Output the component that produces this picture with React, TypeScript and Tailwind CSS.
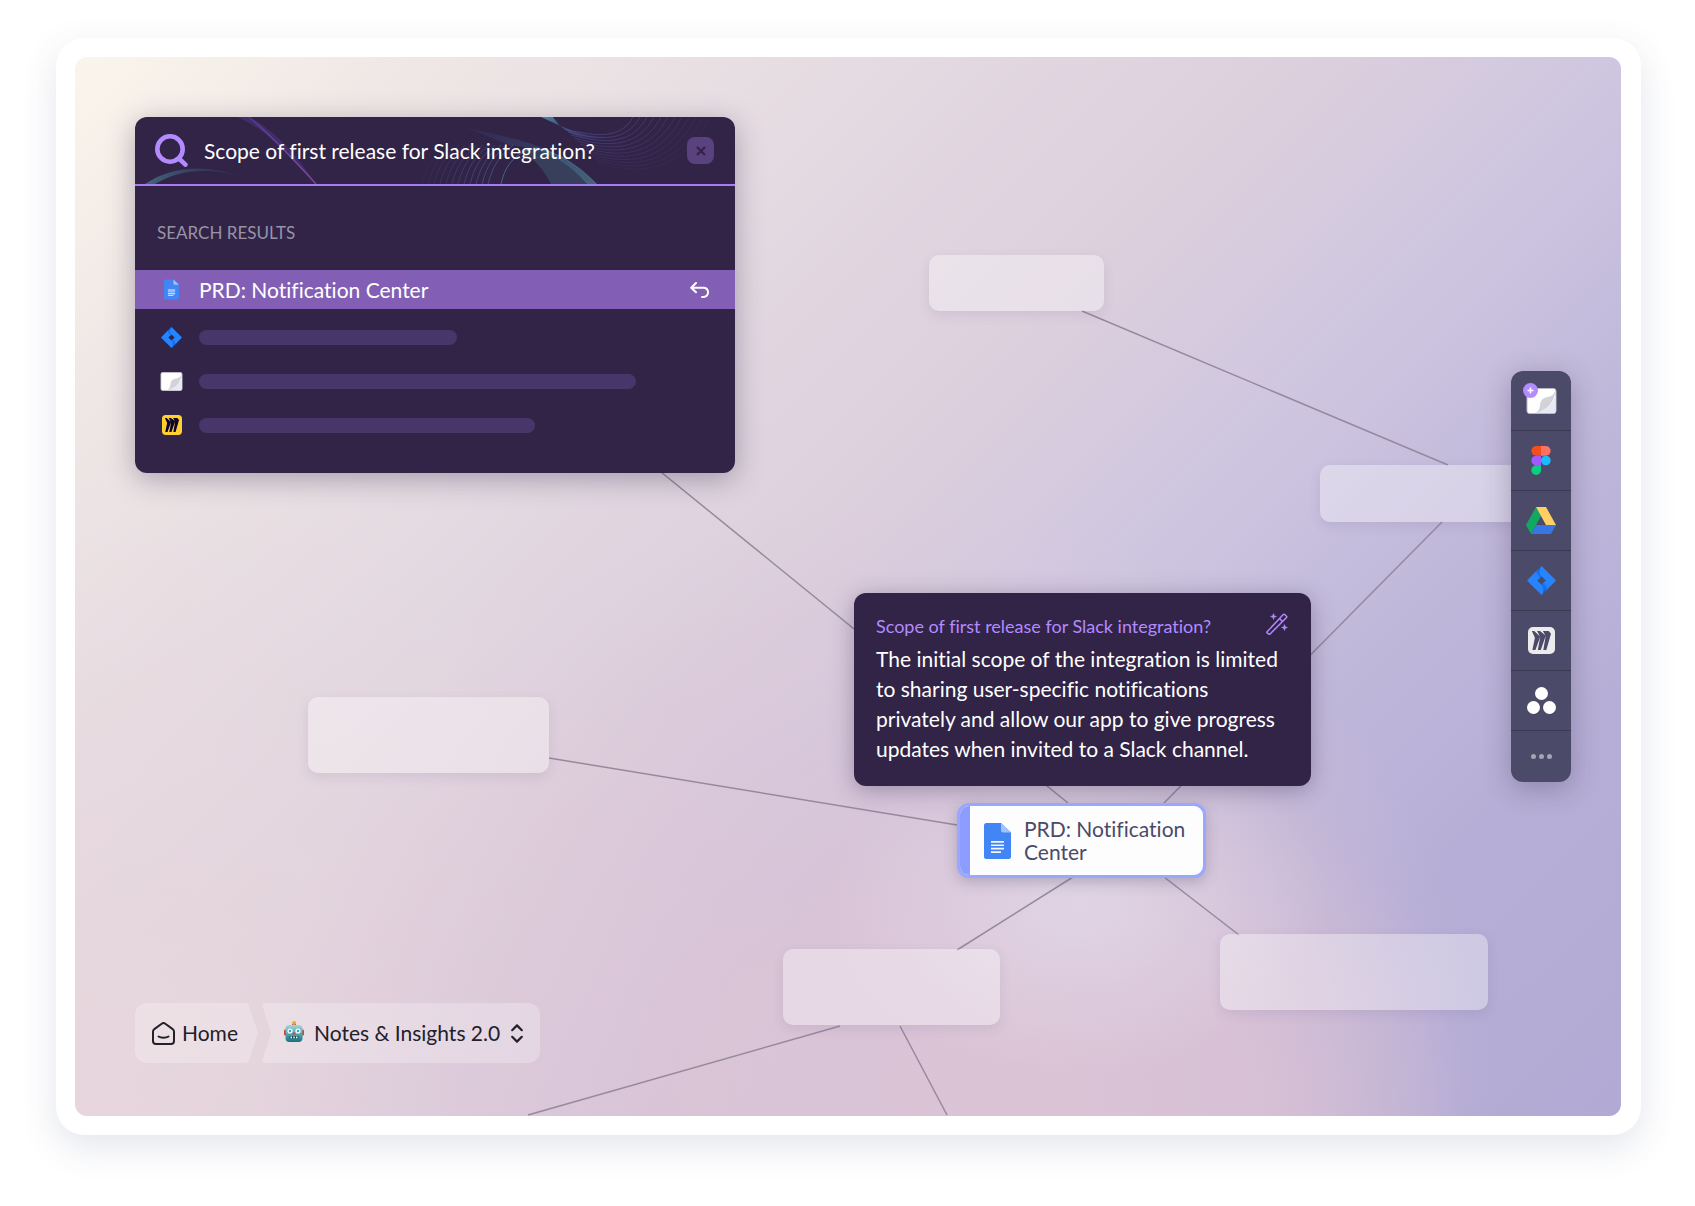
import React from "react";

type IconProps = { className?: string };

const edges = [
  { from: [1007, 254], to: [1373, 408] },
  { from: [1367, 465], to: [1089, 746] },
  { from: [586, 415], to: [993, 746] },
  { from: [474, 701], to: [882, 768] },
  { from: [998, 820], to: [882, 893] },
  { from: [1089, 820], to: [1164, 878] },
  { from: [765, 969], to: [453, 1058] },
  { from: [825, 969], to: [872, 1058] },
];

const emptyNodes = [
  "left-[854px] top-[198px] w-[175px] h-14",
  "left-[1245px] top-[408px] w-[220px] h-[57px]",
  "left-[233px] top-[640px] w-[241px] h-19",
  "left-[708px] top-[892px] w-[217px] h-19",
  "left-[1145px] top-[877px] w-[268px] h-19",
];

function DocIcon({ className }: IconProps) {
  return (
    <svg viewBox="0 0 27 36" className={className} aria-hidden="true">
      <path d="M2.500 0H17l10 9.500v24a2.500 2.500 0 0 1-2.500 2.500h-22A2.500 2.500 0 0 1 0 33.500V2.500A2.500 2.500 0 0 1 2.500 0Z" fill="#4285f4" />
      <path d="M17 0l10 9.500H19.500A2.500 2.500 0 0 1 17 7Z" fill="#a1c2fa" />
      <path d="M7 18h13v1.700H7zM7 21.400h13v1.700H7zM7 24.800h13v1.700H7zM7 28.200h10v1.700H7z" fill="#f1f5fd" />
    </svg>
  );
}

function JiraIcon({ className, id }: IconProps & { id: string }) {
  return (
    <svg viewBox="0 0 28 28" className={className} aria-hidden="true">
      <defs>
        <linearGradient id={id + "a"} x1="0.95" y1="0.1" x2="0.35" y2="0.75">
          <stop offset="0.1" stopColor="#0052cc" />
          <stop offset="1" stopColor="#2684ff" />
        </linearGradient>
        <linearGradient id={id + "b"} x1="0.05" y1="0.9" x2="0.65" y2="0.25">
          <stop offset="0.1" stopColor="#0052cc" />
          <stop offset="1" stopColor="#2684ff" />
        </linearGradient>
      </defs>
      <path d="M14 0 27.400 13.200a1.200 1.200 0 0 1 0 1.600L14 28 .6 14.800a1.200 1.200 0 0 1 0-1.600Zm0 9.900L9.800 14l4.200 4.100L18.200 14Z" fill="#2684ff" fillRule="evenodd" />
      <path d="M14 9.900A6.900 6.900 0 0 1 14 0L6.500 7.400l5.300 4.700Z" fill={`url(#${id}a)`} />
      <path d="M18.200 14 14 18.100a6.900 6.900 0 0 1 0 9.900l7.500-7.400-5.300-4.700Z" fill={`url(#${id}b)`} />
    </svg>
  );
}

function BoardIcon({ className }: IconProps) {
  return (
    <svg viewBox="0 0 30 26" className={className} aria-hidden="true">
      <rect x="0.500" y="0.500" width="29" height="25" rx="2.500" fill="#fff" stroke="#b9b7c4" />
      <path d="M29 7v16a2 2 0 0 1-2 2H9C20 23 27 15 29 7Z" fill="#e8e8f2" />
      <path d="M29 2C28.500 14 20 23 8.500 25c4-2 4.500-4 5-8 .5-5 3.500-7.500 8-8 3.500-.5 6-2.500 7.500-7Z" fill="#d2d2d8" />
    </svg>
  );
}

function MiroIcon({ className, bg, fg }: IconProps & { bg: string; fg: string }) {
  return (
    <svg viewBox="0 0 27 27" className={className} aria-hidden="true">
      <rect width="27" height="27" rx="5" fill={bg} />
      <path
        d="M17.800 4h-2.900l2.400 4.200L12 4H9.100l2.700 5.200L6.200 4H3.900l3 6.800L4.400 23h3l5-13.500L9.800 23h3l5-14.500L15.300 23h3l4.700-16.300L20.700 4h-2.900l.5 2Z"
        fill={fg}
      />
    </svg>
  );
}

function FigmaIcon() {
  return (
    <svg viewBox="0 0 20 30" className="h-[29px] w-5" aria-hidden="true">
      <path d="M5 0h5v10H5A5 5 0 0 1 5 0Z" fill="#f24e1e" />
      <path d="M10 0h5a5 5 0 0 1 0 10h-5Z" fill="#ff7262" />
      <path d="M5 10h5v10H5a5 5 0 0 1 0-10Z" fill="#a259ff" />
      <circle cx="15" cy="15" r="5" fill="#1abcfe" />
      <path d="M5 20h5v5a5 5 0 1 1-5-5Z" fill="#0acf83" />
    </svg>
  );
}

function DriveIcon() {
  return (
    <svg viewBox="0 0 30 27" className="h-[27px] w-[30px]" aria-hidden="true">
      <path d="M10 0 0 18l5 9L15 9Z" fill="#11a861" />
      <path d="M10 0h10l10 18H20Z" fill="#ffcf63" />
      <path d="M5 27l5-9h20l-5 9Z" fill="#3777e3" />
    </svg>
  );
}

function AsanaIcon() {
  return (
    <svg viewBox="0 0 29 27" className="h-[27px] w-[29px]" fill="#fff" aria-hidden="true">
      <circle cx="14.500" cy="6.500" r="6.500" />
      <circle cx="6.500" cy="20.500" r="6.500" />
      <circle cx="22.500" cy="20.500" r="6.500" />
    </svg>
  );
}

function RobotIcon() {
  return (
    <svg viewBox="0 0 20 21" className="h-[21px] w-5" aria-hidden="true">
      <defs>
        <linearGradient id="robot" x1="0" y1="0" x2="0" y2="1">
          <stop offset="0" stopColor="#a9d3d4" />
          <stop offset="0.55" stopColor="#4fa3ad" />
          <stop offset="1" stopColor="#14707f" />
        </linearGradient>
      </defs>
      <rect x="8.200" y="2.500" width="3.800" height="2.500" fill="#5b4a8c" />
      <circle cx="10.100" cy="2" r="2" fill="#f6a623" />
      <rect x="0" y="8.500" width="3" height="6" rx="1.200" fill="#c8453b" />
      <rect x="17" y="8.500" width="3" height="6" rx="1.200" fill="#c8453b" />
      <rect x="1.500" y="4" width="17" height="17" rx="4" fill="url(#robot)" />
      <circle cx="6" cy="10" r="2.600" fill="#e8fbff" />
      <circle cx="14" cy="10" r="2.600" fill="#e8fbff" />
      <circle cx="6" cy="10" r="1.200" fill="#2f9fd0" />
      <circle cx="14" cy="10" r="1.200" fill="#2f9fd0" />
      <path d="M10 10.500l1.600 3H8.400Z" fill="#d63f2f" />
      <rect x="5.500" y="15" width="9" height="2.600" rx="0.800" fill="#0e4f5c" />
      <path d="M6.500 15.400h1.500v1.800H6.500zM9.300 15.400h1.500v1.800H9.300zM12 15.400h1.500v1.800H12z" fill="#e9f7f7" />
    </svg>
  );
}

function WandIcon() {
  return (
    <svg viewBox="0 0 22 22" className="h-[22px] w-[22px] shrink-0" fill="none" stroke="#b48aff" strokeWidth="1.400" strokeLinejoin="round" aria-hidden="true">
      <path d="M.9 18.900 17.300 1.500a1 1 0 0 1 1.400 0l1.800 1.700a1 1 0 0 1 0 1.400L4.100 20.900a1 1 0 0 1-1.400 0L1 19.900a.8.8 0 0 1 0-1Z" />
      <path d="m13.500 5.600 3 2.900" />
      <path d="M7.500.5 8.300 2.700 10.500 3.500 8.300 4.300 7.500 6.500 6.700 4.300 4.500 3.500 6.700 2.700ZM18.500 11.500l.8 2.200 2.200.8-2.200.8-.8 2.200-.8-2.200-2.200-.8 2.200-.8Z" fill="#b48aff" strokeWidth="0.500" />
    </svg>
  );
}

function HeaderWaves() {
  return (
    <svg viewBox="0 0 600 67" preserveAspectRatio="xMinYMin slice" className="absolute inset-0 h-full w-full" fill="none" aria-hidden="true">
      <defs>
        <linearGradient id="purpleFade" x1="0" y1="0" x2="1" y2="1">
          <stop offset="0" stopColor="#6a45b0" stopOpacity="0.500" />
          <stop offset="0.600" stopColor="#8a55c4" stopOpacity="0.700" />
          <stop offset="1" stopColor="#a45ab8" stopOpacity="0.600" />
        </linearGradient>
        <linearGradient id="tealFade" x1="0" y1="0" x2="1" y2="0">
          <stop offset="0" stopColor="#4f93a0" stopOpacity="0.600" />
          <stop offset="1" stopColor="#3a4f80" stopOpacity="0.100" />
        </linearGradient>
        <linearGradient id="ribbonTop" x1="0" y1="0" x2="1" y2="1">
          <stop offset="0" stopColor="#4f9cb8" stopOpacity="0.800" />
          <stop offset="1" stopColor="#4a4aa0" stopOpacity="0.100" />
        </linearGradient>
        <linearGradient id="ribbonBottom" x1="0" y1="0" x2="1" y2="1">
          <stop offset="0" stopColor="#3f5aa0" stopOpacity="0.100" />
          <stop offset="0.500" stopColor="#3f6a9c" stopOpacity="0.350" />
          <stop offset="1" stopColor="#5aa0b0" stopOpacity="0.400" />
        </linearGradient>
      </defs>
      <path d="M102 0C135 14 155 38 181 67 160 36 140 14 114 0Z" fill="#5c3ba0" opacity="0.400" />
      <path d="M114 0C138 20 160 44 181 67" stroke="url(#purpleFade)" strokeWidth="1.500" />
      <path d="M10 67C35 50 70 46 108 60 70 50 45 53 20 67Z" fill="url(#tealFade)" />
      <path d="M406 0C428 10 445 19 470 20 450 26 428 16 418 0Z" fill="url(#ribbonTop)" />
      <path d="M330 10C365 20 425 25 462 67H452C430 40 400 30 374 28Z" fill="url(#ribbonBottom)" />
      <path d="M400 30C425 36 440 50 460 67H416C408 52 400 42 386 34Z" fill="#4f9098" opacity="0.250" />
      {[0, 1, 2, 3, 4, 5, 6, 7, 8, 9, 10, 11].map((n) => (
        <path
          key={n}
          d={`M${498 + n * 7} 0C${486 + n * 6} ${22 + n * 2} ${462 + n * 5} ${20 + n * 4} ${430 + n * 3} ${12 + n * 3}`}
          stroke="#6a62b8"
          strokeOpacity={0.5 - n * 0.035}
          strokeWidth="0.800"
        />
      ))}
      {[0, 1, 2, 3, 4, 5, 6, 7, 8, 9, 10, 11, 12].map((n) => (
        <path
          key={n}
          d={`M${353 - n * 6} 67C${358 - n * 6} 48 ${364 - n * 6} 40 ${378 - n * 6} 28`}
          stroke="#5a78c0"
          strokeOpacity={0.6 - n * 0.045}
          strokeWidth="0.800"
        />
      ))}
      <path d="M366 67C370 50 376 42 390 34 415 26 440 48 461 67" stroke="#5aa0b4" strokeOpacity="0.500" />
    </svg>
  );
}

const results = [
  { name: "Jira issue", icon: <JiraIcon id="jiraRow" className="size-[21px]" />, bar: "w-[258px]" },
  { name: "Whiteboard", icon: <BoardIcon className="h-[19px] w-[23px]" />, bar: "w-[437px]" },
  { name: "Miro board", icon: <MiroIcon bg="#ffd02f" fg="#0c0530" className="size-5" />, bar: "w-[336px]" },
];

function SearchPanel() {
  return (
    <section className="pointer-events-auto w-[600px] overflow-hidden rounded-xl bg-[#312447] pb-[26px] shadow-[0_6px_28px_rgba(49,36,71,0.35)]">
      <div className="relative flex h-[69px] items-center border-b-2 border-[#a77bf3] pl-5 pr-[21px]">
        <HeaderWaves />
        <svg viewBox="0 0 33 33" className="relative size-[33px] shrink-0" fill="none" stroke="#b48aff" strokeWidth="4.600" strokeLinecap="round" aria-hidden="true">
          <circle cx="15" cy="15" r="12.700" />
          <path d="m24.500 25 5.900 5.600" />
        </svg>
        <input
          type="text"
          aria-label="Search"
          defaultValue="Scope of first release for Slack integration?"
          className="relative ml-4 min-w-0 flex-1 bg-transparent text-[21px] leading-6 text-white outline-none"
        />
        <button type="button" aria-label="Clear search" className="relative flex size-[27px] items-center justify-center rounded-lg bg-[#5a427f]">
          <svg viewBox="0 0 10 10" className="size-[10px]" stroke="#312447" strokeWidth="2.200" aria-hidden="true">
            <path d="M1 1l8 8M9 1 1 9" />
          </svg>
        </button>
      </div>
      <h2 className="mt-[35px] pl-[22px] text-[17px] leading-6 text-[#9a93a8]">SEARCH RESULTS</h2>
      <button type="button" className="mt-[25px] flex h-[39px] w-full items-center bg-[#825fb5] pl-[25px] pr-[25px] text-left text-[21px] text-white">
        <span className="flex w-[23px] justify-center">
          <DocIcon className="h-[21px] w-[15px]" />
        </span>
        <span className="ml-4 flex-1">PRD: Notification Center</span>
        <svg viewBox="0 0 20 16" className="h-4 w-5" fill="none" stroke="#fff" strokeWidth="2" strokeLinecap="round" strokeLinejoin="round" aria-hidden="true">
          <path d="M6 1 1.200 5.700 6 10.300M1.500 5.700H14a4.700 4.700 0 0 1 0 9.300h-2" />
        </svg>
      </button>
      <ul className="mt-1.5">
        {results.map((row) => (
          <li key={row.name} aria-label={row.name} className="flex h-11 items-center pl-[25px]">
            <span className="flex w-[23px] justify-center">{row.icon}</span>
            <span className={"ml-4 h-[15px] rounded-full bg-[#48366b] " + row.bar} />
          </li>
        ))}
      </ul>
    </section>
  );
}

function Breadcrumb() {
  return (
    <nav aria-label="Breadcrumb" className="pointer-events-auto flex h-[60px] text-[21px] text-[#22202a]">
      <a href="#home" className="relative flex w-[123px] items-center gap-[7px] pl-[17px]">
        <svg viewBox="0 0 123 60" className="absolute inset-0 h-full w-full" fill="#fff" fillOpacity="0.250" aria-hidden="true">
          <path d="M12 0H110q3 0 4 3l8.500 25q.8 2 0 4L114 57q-1 3-4 3H12A12 12 0 0 1 0 48V12A12 12 0 0 1 12 0Z" />
        </svg>
        <svg viewBox="0 0 23 23" className="relative size-[23px]" fill="none" stroke="currentColor" strokeWidth="2" strokeLinecap="round" strokeLinejoin="round" aria-hidden="true">
          <path d="M1 9.500a3 3 0 0 1 1.300-2.400l7.400-5.400a3 3 0 0 1 3.600 0l7.400 5.400A3 3 0 0 1 22 9.500V19a3 3 0 0 1-3 3H4a3 3 0 0 1-3-3Z" />
          <path d="M6.500 14.500c2.500 1.700 7.500 1.700 10 0" />
        </svg>
        <span className="relative">Home</span>
      </a>
      <button type="button" className="relative ml-1 flex w-[278px] items-center pl-[22px]">
        <svg viewBox="0 0 278 60" className="absolute inset-0 h-full w-full" fill="#fff" fillOpacity="0.250" aria-hidden="true">
          <path d="M4 0H266a12 12 0 0 1 12 12V48a12 12 0 0 1-12 12H4Q-1 60 .8 56L8.500 32q.8-2 0-4L.8 4Q-1 0 4 0Z" />
        </svg>
        <span className="relative pb-1">
          <RobotIcon />
        </span>
        <span className="relative ml-[10px] flex-1 text-left">Notes &amp; Insights 2.0</span>
        <svg viewBox="0 0 12 19" className="relative mr-[17px] h-[19px] w-3" fill="none" stroke="currentColor" strokeWidth="2.200" strokeLinecap="round" strokeLinejoin="round" aria-hidden="true">
          <path d="M1.200 6.200 6 1.400l4.800 4.800M1.200 12.800 6 17.600l4.800-4.800" />
        </svg>
      </button>
    </nav>
  );
}

const tools = [
  {
    name: "New whiteboard",
    icon: (
      <span className="relative">
        <BoardIcon className="h-[26px] w-[31px]" />
        <svg viewBox="0 0 15 15" className="absolute -left-[3px] -top-[5px] size-[15px]" aria-hidden="true">
          <circle cx="7.500" cy="7.500" r="7.500" fill="#b48aff" />
          <path d="M7.500 4.500v6M4.500 7.500h6" stroke="#fff" strokeWidth="1.500" />
        </svg>
      </span>
    ),
  },
  { name: "Figma", icon: <FigmaIcon /> },
  { name: "Google Drive", icon: <DriveIcon /> },
  { name: "Jira", icon: <JiraIcon id="jiraTool" className="size-[29px]" /> },
  { name: "Miro", icon: <MiroIcon bg="#ebebee" fg="#4b4a68" className="size-[27px]" /> },
  { name: "Asana", icon: <AsanaIcon /> },
];

function Toolbar() {
  return (
    <aside className="pointer-events-auto mt-[254px] flex w-[60px] flex-col overflow-hidden rounded-xl bg-[#4b4a68] shadow-[0_6px_28px_rgba(49,36,71,0.3)]">
      {tools.map((tool) => (
        <button key={tool.name} type="button" aria-label={tool.name} className="flex h-15 items-center justify-center border-b border-[#3b3950]">
          {tool.icon}
        </button>
      ))}
      <button type="button" aria-label="More" className="flex h-[51px] items-center justify-center gap-[3px]">
        <span className="size-[5px] rounded-full bg-[#a5a4b3]" />
        <span className="size-[5px] rounded-full bg-[#a5a4b3]" />
        <span className="size-[5px] rounded-full bg-[#a5a4b3]" />
      </button>
    </aside>
  );
}

function AnswerCard() {
  return (
    <article className="absolute left-[779px] top-[536px] h-[193px] w-[457px] rounded-xl bg-[#312447] pl-[22px] pr-[23px] pt-5 shadow-[0_4px_22px_rgba(49,36,71,0.35)]">
      <div className="flex justify-between">
        <h3 className="text-[18px] leading-[26px] text-[#b48aff]">Scope of first release for Slack integration?</h3>
        <WandIcon />
      </div>
      <p className="mt-[5px] whitespace-nowrap text-[21px] leading-[30px] text-white">
        The initial scope of the integration is limited
        <br />
        to sharing user-specific notifications
        <br />
        privately and allow our app to give progress
        <br />
        updates when invited to a Slack channel.
      </p>
    </article>
  );
}

function DocumentNode() {
  return (
    <button
      type="button"
      className="absolute left-[882px] top-[746px] flex h-[75px] w-[249px] items-center overflow-hidden rounded-xl border-3 border-[#98a7ff] bg-[#fdfdfe] text-left shadow-[0_4px_14px_rgba(75,74,104,0.3)]"
    >
      <span className="h-full w-[10px] bg-[#8c9cff]" />
      <DocIcon className="ml-[14px] h-9 w-[27px]" />
      <span className="ml-[13px] pb-0.5 text-[21px] leading-[23px] text-[#4b4a68]">
        PRD: Notification
        <br />
        Center
      </span>
    </button>
  );
}

export default function App() {
  return (
    <div className="flex min-h-screen bg-white pb-[71px] pl-14 pr-[54px] pt-[38px] font-['Lato',sans-serif] [font-variant-ligatures:none]">
      <div className="flex flex-1 rounded-[28px] bg-white py-[19px] pl-[19px] pr-5 shadow-[0_12px_36px_rgba(60,70,110,0.14)]">
        <main className="relative flex flex-1 overflow-hidden rounded-xl bg-[radial-gradient(ellipse_16%_16%_at_65%_80%,rgba(226,217,232,0.8),rgba(226,217,232,0)),radial-gradient(ellipse_40%_58%_at_52%_100%,rgba(219,196,214,0.9)_30%,rgba(219,196,214,0)),radial-gradient(ellipse_24%_36%_at_66%_100%,rgba(213,190,212,0.9)_45%,rgba(213,190,212,0)),radial-gradient(ellipse_50%_60%_at_0%_100%,rgba(232,214,220,0.9),rgba(232,214,220,0)),linear-gradient(135deg,#faf5ec_0%,#f0e8e6_12%,#e3d9e1_33%,#dccfdd_48%,#cec6e0_60%,#c0b8da_72%,#b6aed6_84%,#b2aad4_100%)]">
          <svg className="absolute inset-0 h-full w-full" stroke="#96899f" strokeWidth="1.500" aria-hidden="true">
            {edges.map((edge) => (
              <line key={edge.from.join()} x1={edge.from[0]} y1={edge.from[1]} x2={edge.to[0]} y2={edge.to[1]} />
            ))}
          </svg>
          {emptyNodes.map((place) => (
            <div key={place} className={"absolute rounded-[10px] bg-white/35 shadow-[0_4px_12px_rgba(90,70,120,0.12)] " + place} />
          ))}
          <AnswerCard />
          <DocumentNode />
          <div className="pointer-events-none relative flex flex-1 items-start justify-between pb-[53px] pl-[60px] pr-[50px] pt-[60px]">
            <div className="flex flex-col justify-between self-stretch">
              <SearchPanel />
              <Breadcrumb />
            </div>
            <Toolbar />
          </div>
        </main>
      </div>
    </div>
  );
}
